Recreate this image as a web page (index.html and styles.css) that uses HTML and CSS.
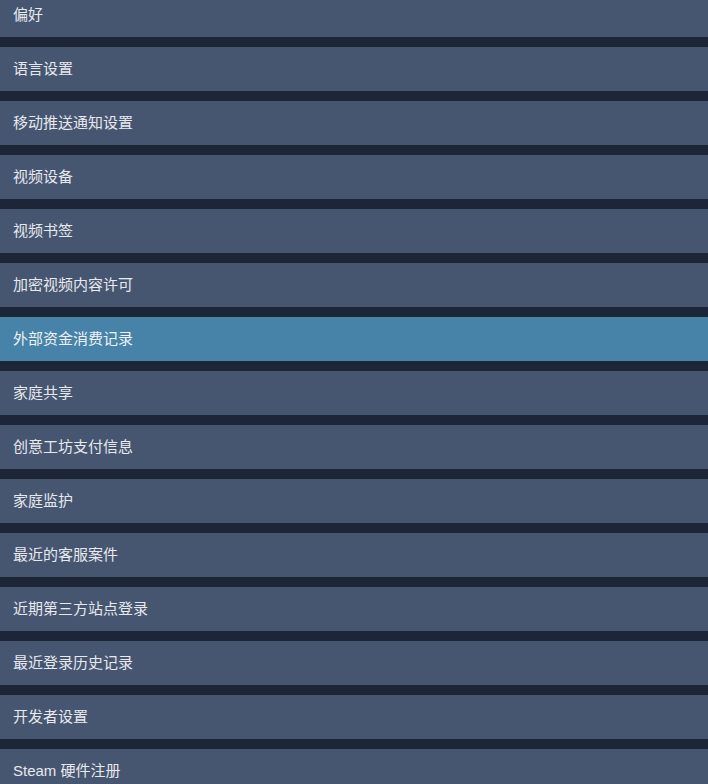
FILE: index.html
```html
<!DOCTYPE html>
<html lang="zh-CN">
<head>
<meta charset="utf-8">
<link rel="stylesheet" href="styles.css">
</head>
<body>
<div class="menu">
  <div class="item">偏好</div>
  <div class="item">语言设置</div>
  <div class="item">移动推送通知设置</div>
  <div class="item">视频设备</div>
  <div class="item">视频书签</div>
  <div class="item">加密视频内容许可</div>
  <div class="item active">外部资金消费记录</div>
  <div class="item">家庭共享</div>
  <div class="item">创意工坊支付信息</div>
  <div class="item">家庭监护</div>
  <div class="item">最近的客服案件</div>
  <div class="item">近期第三方站点登录</div>
  <div class="item">最近登录历史记录</div>
  <div class="item">开发者设置</div>
  <div class="item">Steam 硬件注册</div>
</div>
</body>
</html>
```
FILE: styles.css
```css
html, body {
  margin: 0;
  padding: 0;
  background: #1c2637;
  overflow: hidden;
}
.menu {
  display: flex;
  flex-direction: column;
  gap: 10px;
  margin-top: -7px;
}
.item {
  height: 44px;
  box-sizing: border-box;
  display: flex;
  align-items: center;
  padding-left: 13px;
  padding-bottom: 4px;
  background: #465670;
  color: #e6e9ee;
  font-family: "Liberation Sans", "Noto Sans CJK SC", sans-serif;
  font-size: 15px;
}
.item.active {
  background: #4782a8;
  color: #eef2f6;
}
```
